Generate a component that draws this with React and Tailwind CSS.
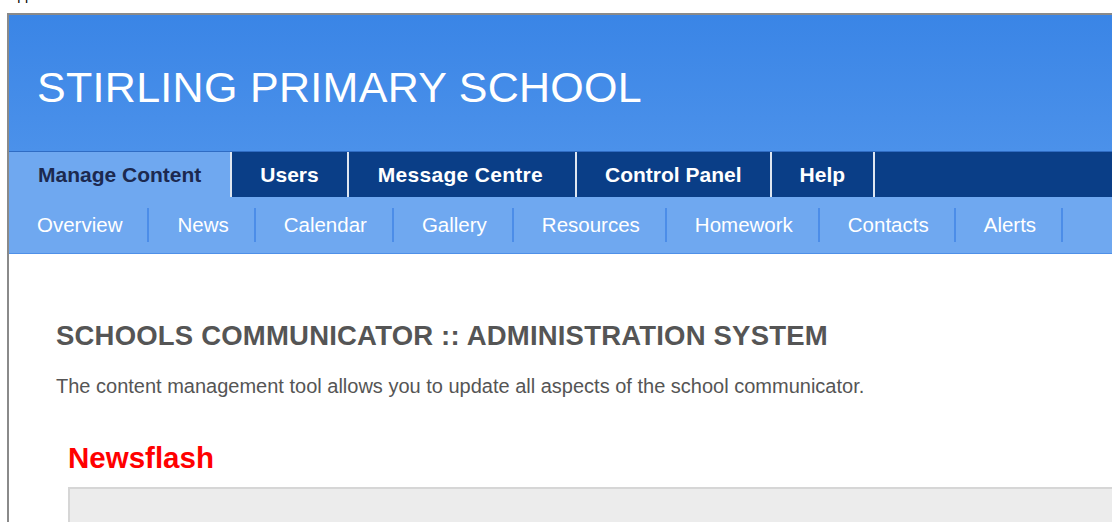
import React from 'react';

const tabs = [
  { label: 'Manage Content', active: true },
  { label: 'Users' },
  { label: 'Message Centre', wide: true },
  { label: 'Control Panel' },
  { label: 'Help' },
];

const subLinks = ['Overview', 'News', 'Calendar', 'Gallery', 'Resources', 'Homework', 'Contacts', 'Alerts'];

const font = { fontFamily: '"Liberation Sans", Arial, sans-serif' };

const App = () => {
  return (
    <div className="w-[1112px] h-[522px] overflow-hidden bg-white flex flex-col" style={font}>
      {/* window caption, mostly scrolled out of view */}
      <div className="h-[13px] shrink-0 overflow-hidden pl-[8px]">
        <div className="mt-[-12px] text-[14px] leading-[14px] text-black">App</div>
      </div>

      <div className="ml-[7px] flex-1 border-l-2 border-t-2 border-[#8a8a8a] flex flex-col min-h-0">
        {/* school banner */}
        <div className="h-[136px] shrink-0 bg-gradient-to-b from-[#3a85e6] to-[#4b91ea] pl-[28px] pt-[47px]">
          <h1 className="text-[43px] leading-[50px] text-white tracking-[0.3px]">STIRLING PRIMARY SCHOOL</h1>
        </div>

        {/* main sections */}
        <div className="h-[46px] shrink-0 flex bg-[#0a3e87] border-t border-[#2f6cc4]">
          {tabs.map(t => (
            <div
              key={t.label}
              className={
                t.active
                  ? 'px-[29px] flex items-center bg-[#6fa8f0] text-[#1c294f] text-[21px] font-bold border-r-2 border-[#dfe6f0]'
                  : t.wide
                    ? 'pl-[29px] pr-[32px] flex items-center text-white text-[21px] font-bold tracking-[0.3px] border-r-2 border-[#dfe6f0]'
                    : 'px-[28px] flex items-center text-white text-[21px] font-bold border-r-2 border-[#dfe6f0]'
              }
            >
              {t.label}
            </div>
          ))}
        </div>

        {/* sub navigation */}
        <div className="h-[57px] shrink-0 flex bg-[#6fa8f0] border-b border-[#4f90e8]">
          {subLinks.map(link => (
            <div key={link} className="flex items-center">
              <span className="pl-[28px] pr-[25px] text-[20.5px] text-white">{link}</span>
              <span className="w-[2px] h-[34px] bg-[#4c8de8]" />
            </div>
          ))}
        </div>

        {/* content */}
        <div className="flex-1 pl-[47px] pt-[66px]">
          <h2 className="text-[27.5px] leading-[32px] font-bold text-[#555555] tracking-[0.2px]">
            SCHOOLS COMMUNICATOR :: ADMINISTRATION SYSTEM
          </h2>
          <p className="mt-[22px] text-[20px] leading-[24px] text-[#555555]">
            The content management tool allows you to update all aspects of the school communicator.
          </p>
          <div className="ml-[12px] mt-[43px]">
            <h3 className="text-[29.5px] leading-[34px] font-bold text-[#ff0000]">Newsflash</h3>
            <div className="mt-[12px] h-[120px] bg-[#ececec] border-l-2 border-t-2 border-[#d6d6d6]" />
          </div>
        </div>
      </div>
    </div>
  );
};

export default App;
